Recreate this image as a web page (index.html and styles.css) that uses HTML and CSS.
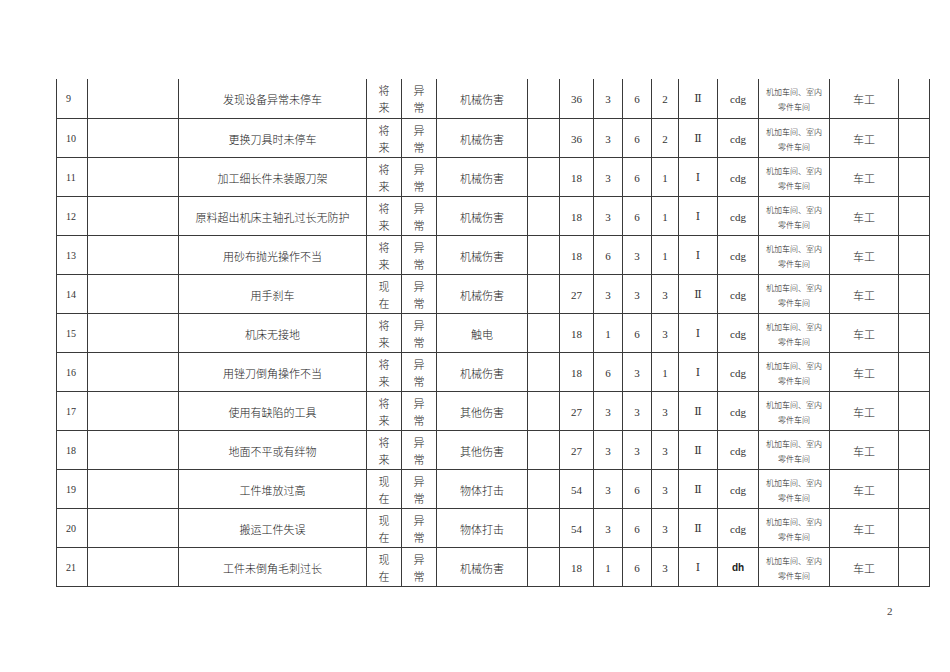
FILE: index.html
```html
<!DOCTYPE html>
<html lang="zh">
<head>
<meta charset="utf-8">
<title>危险源辨识表</title>
<link rel="stylesheet" href="styles.css">
</head>
<body>
<div class="page">
<table class="sheet">
<colgroup>
<col class="c1"><col class="c2"><col class="c3"><col class="c4"><col class="c5"><col class="c6"><col class="c7"><col class="c8"><col class="c9"><col class="c10"><col class="c11"><col class="c12"><col class="c13"><col class="c14"><col class="c15"><col class="c16">
</colgroup>
<tbody>
<tr><td class="no">9</td><td></td><td class="zh">发现设备异常未停车</td><td class="st">将<br>来</td><td class="st">异<br>常</td><td class="zh">机械伤害</td><td></td><td class="n">36</td><td class="n">3</td><td class="n">6</td><td class="n">2</td><td class="rn">Ⅱ</td><td class="n">cdg</td><td class="sm">机加车间、室内<br>零件车间</td><td class="zh">车工</td><td></td></tr>
<tr><td class="no">10</td><td></td><td class="zh">更换刀具时未停车</td><td class="st">将<br>来</td><td class="st">异<br>常</td><td class="zh">机械伤害</td><td></td><td class="n">36</td><td class="n">3</td><td class="n">6</td><td class="n">2</td><td class="rn">Ⅱ</td><td class="n">cdg</td><td class="sm">机加车间、室内<br>零件车间</td><td class="zh">车工</td><td></td></tr>
<tr><td class="no">11</td><td></td><td class="zh">加工细长件未装跟刀架</td><td class="st">将<br>来</td><td class="st">异<br>常</td><td class="zh">机械伤害</td><td></td><td class="n">18</td><td class="n">3</td><td class="n">6</td><td class="n">1</td><td class="rn">Ⅰ</td><td class="n">cdg</td><td class="sm">机加车间、室内<br>零件车间</td><td class="zh">车工</td><td></td></tr>
<tr><td class="no">12</td><td></td><td class="zh">原料超出机床主轴孔过长无防护</td><td class="st">将<br>来</td><td class="st">异<br>常</td><td class="zh">机械伤害</td><td></td><td class="n">18</td><td class="n">3</td><td class="n">6</td><td class="n">1</td><td class="rn">Ⅰ</td><td class="n">cdg</td><td class="sm">机加车间、室内<br>零件车间</td><td class="zh">车工</td><td></td></tr>
<tr><td class="no">13</td><td></td><td class="zh">用砂布抛光操作不当</td><td class="st">将<br>来</td><td class="st">异<br>常</td><td class="zh">机械伤害</td><td></td><td class="n">18</td><td class="n">6</td><td class="n">3</td><td class="n">1</td><td class="rn">Ⅰ</td><td class="n">cdg</td><td class="sm">机加车间、室内<br>零件车间</td><td class="zh">车工</td><td></td></tr>
<tr><td class="no">14</td><td></td><td class="zh">用手刹车</td><td class="st">现<br>在</td><td class="st">异<br>常</td><td class="zh">机械伤害</td><td></td><td class="n">27</td><td class="n">3</td><td class="n">3</td><td class="n">3</td><td class="rn">Ⅱ</td><td class="n">cdg</td><td class="sm">机加车间、室内<br>零件车间</td><td class="zh">车工</td><td></td></tr>
<tr><td class="no">15</td><td></td><td class="zh">机床无接地</td><td class="st">将<br>来</td><td class="st">异<br>常</td><td class="zh">触电</td><td></td><td class="n">18</td><td class="n">1</td><td class="n">6</td><td class="n">3</td><td class="rn">Ⅰ</td><td class="n">cdg</td><td class="sm">机加车间、室内<br>零件车间</td><td class="zh">车工</td><td></td></tr>
<tr><td class="no">16</td><td></td><td class="zh">用锉刀倒角操作不当</td><td class="st">将<br>来</td><td class="st">异<br>常</td><td class="zh">机械伤害</td><td></td><td class="n">18</td><td class="n">6</td><td class="n">3</td><td class="n">1</td><td class="rn">Ⅰ</td><td class="n">cdg</td><td class="sm">机加车间、室内<br>零件车间</td><td class="zh">车工</td><td></td></tr>
<tr><td class="no">17</td><td></td><td class="zh">使用有缺陷的工具</td><td class="st">将<br>来</td><td class="st">异<br>常</td><td class="zh">其他伤害</td><td></td><td class="n">27</td><td class="n">3</td><td class="n">3</td><td class="n">3</td><td class="rn">Ⅱ</td><td class="n">cdg</td><td class="sm">机加车间、室内<br>零件车间</td><td class="zh">车工</td><td></td></tr>
<tr><td class="no">18</td><td></td><td class="zh">地面不平或有绊物</td><td class="st">将<br>来</td><td class="st">异<br>常</td><td class="zh">其他伤害</td><td></td><td class="n">27</td><td class="n">3</td><td class="n">3</td><td class="n">3</td><td class="rn">Ⅱ</td><td class="n">cdg</td><td class="sm">机加车间、室内<br>零件车间</td><td class="zh">车工</td><td></td></tr>
<tr><td class="no">19</td><td></td><td class="zh">工件堆放过高</td><td class="st">现<br>在</td><td class="st">异<br>常</td><td class="zh">物体打击</td><td></td><td class="n">54</td><td class="n">3</td><td class="n">6</td><td class="n">3</td><td class="rn">Ⅱ</td><td class="n">cdg</td><td class="sm">机加车间、室内<br>零件车间</td><td class="zh">车工</td><td></td></tr>
<tr><td class="no">20</td><td></td><td class="zh">搬运工件失误</td><td class="st">现<br>在</td><td class="st">异<br>常</td><td class="zh">物体打击</td><td></td><td class="n">54</td><td class="n">3</td><td class="n">6</td><td class="n">3</td><td class="rn">Ⅱ</td><td class="n">cdg</td><td class="sm">机加车间、室内<br>零件车间</td><td class="zh">车工</td><td></td></tr>
<tr><td class="no">21</td><td></td><td class="zh">工件未倒角毛刺过长</td><td class="st">现<br>在</td><td class="st">异<br>常</td><td class="zh">机械伤害</td><td></td><td class="n">18</td><td class="n">1</td><td class="n">6</td><td class="n">3</td><td class="rn">Ⅰ</td><td class="n dh">dh</td><td class="sm">机加车间、室内<br>零件车间</td><td class="zh">车工</td><td></td></tr>
</tbody>
</table>
<div class="pageno">2</div>
</div>
</body>
</html>
```

FILE: styles.css
```css
html, body {
  margin: 0;
  padding: 0;
  background: #ffffff;
}
body {
  font-family: "Liberation Serif", "Noto Sans CJK SC", serif;
  color: #222222;
}
.page {
  width: 950px;
  height: 672px;
  padding: 79px 0 0 56px;
  box-sizing: border-box;
}
.sheet {
  border-collapse: collapse;
  table-layout: fixed;
  width: 874px;
}
.sheet tr {
  height: 39px;
}
.sheet td {
  border: 1px solid #3a3a3a;
  height: 36px;
  padding: 2px 0 0 0;
  text-align: center;
  vertical-align: middle;
  font-family: "Liberation Serif", serif;
  font-weight: normal;
  font-size: 11px;
  line-height: 14px;
  color: #333333;
  overflow: hidden;
  white-space: nowrap;
}
.sheet tr:first-child td {
  border-top: none;
}
.c1 { width: 31px; }
.c2 { width: 91px; }
.c3 { width: 188px; }
.c4 { width: 35px; }
.c5 { width: 35px; }
.c6 { width: 91px; }
.c7 { width: 32px; }
.c8 { width: 34px; }
.c9 { width: 29px; }
.c10 { width: 29px; }
.c11 { width: 27px; }
.c12 { width: 39px; }
.c13 { width: 41px; }
.c14 { width: 71px; }
.c15 { width: 69px; }
.c16 { width: 31px; }
.sheet td.no {
  text-align: left;
  padding-left: 9px;
  font-size: 10px;
}
.sheet td.zh {
  font-family: "Noto Sans CJK SC", sans-serif;
  font-size: 11px;
  font-weight: 300;
  color: #222222;
}
.sheet td.st {
  font-family: "Noto Sans CJK SC", sans-serif;
  font-size: 11px;
  font-weight: 300;
  line-height: 17px;
  color: #222222;
}
.sheet td.n {
  font-family: "Liberation Serif", serif;
  font-size: 11px;
}
.sheet td.rn {
  font-family: "DejaVu Serif", serif;
  font-size: 11px;
}
.sheet td.dh {
  font-family: "Liberation Sans", sans-serif;
  font-weight: bold;
  font-size: 10px;
  color: #222222;
}
.sheet td.sm {
  font-family: "Noto Sans CJK SC", sans-serif;
  font-size: 8px;
  font-weight: 300;
  line-height: 15px;
  color: #222222;
}
.pageno {
  margin: 18px 0 0 831px;
  font-size: 11px;
  color: #444444;
}
```
